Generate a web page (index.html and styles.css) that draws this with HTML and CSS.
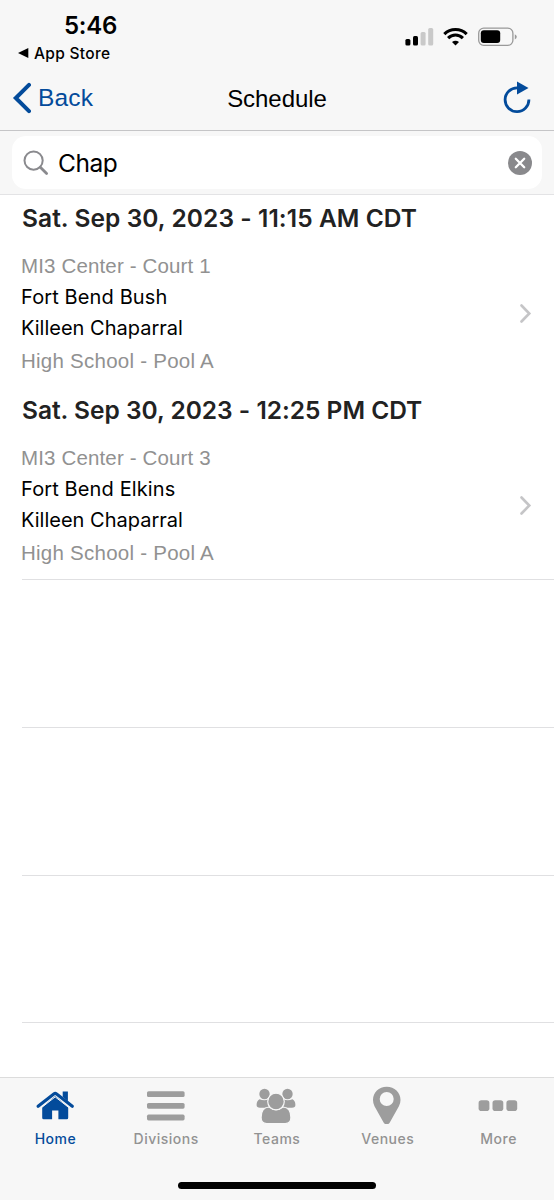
FILE: index.html
```html
<!DOCTYPE html>
<html lang="en">
<head>
<meta charset="utf-8">
<title>Schedule</title>
<link rel="stylesheet" href="styles.css">
</head>
<body>
<div class="screen">
  <header class="top">
    <div class="status">
      <div class="status-left">
        <span class="clock">5:46</span>
        <span class="return"><svg width="11" height="10" viewBox="0 0 11 10"><path d="M0 5 10.3 0v10z" fill="#000"/></svg><span class="app-store">App Store</span></span>
      </div>
      <svg class="indicators" width="114" height="24" viewBox="0 0 114 24">
        <rect x="0.4" y="14" width="5" height="6.5" rx="1.5"/>
        <rect x="8" y="11" width="5" height="9.5" rx="1.5"/>
        <g fill="#c9c9c9"><rect x="15.6" y="7" width="5" height="13.5" rx="1.5"/><rect x="23.2" y="3" width="5" height="17.5" rx="1.5"/></g>
        <g fill="none" stroke="#000" stroke-width="3.1"><path d="M39.3 9.1a16 16 0 0 1 22.4 0"/><path d="M43.1 13.1a10.5 10.5 0 0 1 14.8 0"/></g>
        <path d="M47 17q3.5-2.6 7 0l-3.5 3.5z"/>
        <rect x="73.7" y="3.2" width="34.2" height="17.1" rx="5" fill="none" stroke="#999" stroke-width="1.3"/>
        <rect x="75.8" y="5.3" width="19.4" height="12.8" rx="3"/>
        <path d="M109.8 9.2q4 2.6 0 5.2z" fill="#999"/>
      </svg>
    </div>
    <nav class="nav">
      <a class="back"><svg width="20" height="32" viewBox="0 0 20 32"><path d="M18 2.8 4.8 16 18 29.2" fill="none" stroke="#034b9b" stroke-width="4" stroke-linecap="round"/></svg><span class="back-label">Back</span></a>
      <h1 class="title">Schedule</h1>
      <svg class="refresh" width="28" height="34" viewBox="0 0 28 34"><path d="M14.3 6.9A11.9 11.9 0 1 0 25.9 18.5" fill="none" stroke="#034b9b" stroke-width="2.8"/><path d="M14 .4 25.5 7 14 13.5z" fill="#034b9b"/></svg>
    </nav>
  </header>
  <div class="search">
    <div class="field">
      <svg width="26" height="26" viewBox="0 0 26 26" fill="none" stroke="#8a8a8e"><circle cx="10.6" cy="10.6" r="9.1" stroke-width="2"/><path d="m17.3 17.3 6.3 6.3" stroke-width="2.8" stroke-linecap="round"/></svg>
      <span class="query">Chap</span>
      <svg class="clear" width="24" height="24" viewBox="0 0 24 24"><circle cx="12" cy="12" r="12" fill="#89898c"/><path d="m7.8 7.8 8.4 8.4m0-8.4-8.4 8.4" stroke="#fff" stroke-width="2.3" stroke-linecap="round"/></svg>
    </div>
  </div>
  <main class="list">
    <section class="game">
      <h2 class="date"><span class="date-one">Sat. Sep 30, 2023 - 11:15 AM CDT</span></h2>
      <div class="row">
        <div class="details"><p class="muted court">MI3 Center - Court 1</p><p class="team bush">Fort Bend Bush</p><p class="team">Killeen Chaparral</p><p class="muted pool">High School - Pool A</p></div>
        <svg width="12" height="20" viewBox="0 0 12 20"><path d="m1.5 2.5 7.8 8-7.8 8" fill="none" stroke="#c5c5c7" stroke-width="2.6" stroke-linecap="round"/></svg>
      </div>
    </section>
    <section class="game">
      <h2 class="date"><span class="date-two">Sat. Sep 30, 2023 - 12:25 PM CDT</span></h2>
      <div class="row">
        <div class="details"><p class="muted court">MI3 Center - Court 3</p><p class="team elkins">Fort Bend Elkins</p><p class="team">Killeen Chaparral</p><p class="muted pool">High School - Pool A</p></div>
        <svg width="12" height="20" viewBox="0 0 12 20"><path d="m1.5 2.5 7.8 8-7.8 8" fill="none" stroke="#c5c5c7" stroke-width="2.6" stroke-linecap="round"/></svg>
      </div>
    </section>
    <div class="blank"></div>
    <div class="blank"></div>
    <div class="blank last"></div>
  </main>
  <footer class="bottom">
    <div class="tabs">
      <a class="tab active"><svg width="41" height="38" viewBox="0 0 41 38"><path d="M27.7 5.5h5.2v9.7l-5.2-4.4zM7.2 21.2 20.2 10l13 11.2v10.5q0 1.5-1.5 1.5h-8.3v-8.7h-6.3v8.7H8.700q-1.500 0-1.500-1.500z"/><path d="m3.100 20.200 15.700-12.200q1.400-1 2.800 0l15.700 12.200" fill="none" stroke="#034b9b" stroke-width="3.200" stroke-linecap="round"/><path d="m4.900 22.900 15.300-12 15.300 12" fill="none" stroke="#f7f7f7" stroke-width="1"/></svg><span>Home</span></a>
      <a class="tab"><svg width="41" height="38" viewBox="0 0 41 38"><rect x="1" y="5.2" width="37.6" height="5.8" rx="1.6"/><rect x="1" y="16.9" width="37.6" height="5.8" rx="1.6"/><rect x="1" y="28.6" width="37.6" height="5.8" rx="1.6"/></svg><span class="divisions">Divisions</span></a>
      <a class="tab"><svg width="41" height="38" viewBox="0 0 41 38"><circle cx="8.5" cy="8" r="5.2"/><circle cx="31.5" cy="8" r="5.2"/><path d="M3.5 13.2q5 2 9.2 0v8.6H4Q.6 21.8.6 19q0-4.2 2.9-5.8zm33 0q-5 2-9.2 0v8.6H36q3.4 0 3.4-2.8 0-4.2-2.9-5.8z"/><g stroke="#f7f7f7" stroke-width="1.2"><path d="M13 21q7 5.4 14 0 7.9.7 7.9 10.5 0 6-5.6 6H10.7q-5.6 0-5.6-6 0-9.8 7.9-10.5z"/><circle cx="20" cy="15.5" r="8.3"/></g></svg><span>Teams</span></a>
      <a class="tab"><svg width="41" height="38" viewBox="0 0 41 38"><path fill-rule="evenodd" d="M19.7.7C11.9.7 6 6.4 6 14q0 3.3 1.5 6.3l9.1 16.2q3.1 4 6.2 0l9.1-16.2q1.6-3.1 1.6-6.3C33.5 6.4 27.5.7 19.7.7zM19.7 6a7 7 0 1 1 0 14 7 7 0 0 1 0-14z"/></svg><span>Venues</span></a>
      <a class="tab"><svg width="41" height="38" viewBox="0 0 41 38"><rect x=".6" y="14.2" width="10.8" height="10.8" rx="2.8"/><rect x="14.5" y="14.2" width="10.8" height="10.8" rx="2.8"/><rect x="28.4" y="14.2" width="10.8" height="10.8" rx="2.8"/></svg><span>More</span></a>
    </div>
    <div class="home-indicator"></div>
  </footer>
</div>
</body>
</html>
```
FILE: styles.css
```css
* { box-sizing: border-box; }
body, h1, h2, p { margin: 0; font-weight: 400; }
body { background: #fff; font-family: Inter, sans-serif; color: #000; }
svg { display: block; flex: none; }
span, h1, h2, p { white-space: nowrap; }
.screen { height: 1200px; display: flex; flex-direction: column; overflow: hidden; }
.top { height: 131px; background: #f7f7f7; border-bottom: 1px solid #c5c5c7; }
.status { height: 66px; display: flex; justify-content: space-between; padding: 12px 35px 0 18px; }
.status-left { display: flex; flex-direction: column; }
.clock { padding-left: 46px; font-size: 24px; line-height: 28px; font-weight: 600; letter-spacing: -.25px; }
.return { display: flex; align-items: center; gap: 5px; height: 26px; font-size: 15.5px; font-weight: 500; letter-spacing: .3px; }
.indicators { margin-top: 13px; }
.nav { height: 64px; display: grid; grid-template-columns: 1fr auto 1fr; align-items: center; padding: 0 23px 0 11px; font-family: "Liberation Sans", Arial, sans-serif; font-size: 24.5px; }
.back { display: flex; align-items: center; gap: 7px; color: #034b9b; letter-spacing: .2px; }
.title { font-size: 24px; letter-spacing: -.05px; padding-left: 12px; padding-top: 1px; }
.refresh { justify-self: end; }
.search { height: 64px; padding: 5px 12px 6px; background: #f7f7f7; border-bottom: 1px solid #e3e3e5; }
.field { height: 53px; display: flex; align-items: center; border-radius: 14px; padding: 0 10px 0 11px; background: #fff; }
.query { flex: 1; padding-left: 9px; font-size: 24.5px; letter-spacing: -.5px; }
.list { flex: 1; }
.game { height: 192px; }
.date { height: 47px; padding-left: 22px; font-size: 24.5px; line-height: 47px; font-weight: 600; color: #222; }
.date-one { letter-spacing: .07px; }
.date-two { letter-spacing: -.01px; }
.row { display: flex; align-items: center; justify-content: space-between; padding: 7px 22px 0 21px; }
.details { height: 128px; padding-top: 2px; }
.muted { font-family: "Liberation Sans", Arial, sans-serif; font-size: 20.5px; line-height: 30px; color: #919191; letter-spacing: .15px; }
.team { font-size: 20px; line-height: 31px; }
.court { height: 31px; }
.bush, .elkins { letter-spacing: .12px; }
.pool { line-height: 33px; letter-spacing: .25px; }
.blank { height: 147.8px; margin-left: 22px; border-top: 1px solid #e0e0e2; }
.last { height: 148.4px; border-bottom: 1px solid #e0e0e2; }
.bottom { height: 123px; background: #f7f7f7; border-top: 1px solid #dcdcdc; }
.tabs { height: 104px; display: grid; grid-template-columns: repeat(5, 1fr); padding-top: 8px; }
.tab { display: flex; flex-direction: column; align-items: center; fill: #9d9d9d; color: #929292; font-size: 14px; line-height: 30px; font-weight: 500; letter-spacing: .5px; }
.active { color: #034b9b; fill: #034b9b; }
.home-indicator { width: 198px; height: 7px; margin: 0 auto; border-radius: 4px; background: #000; }
```
